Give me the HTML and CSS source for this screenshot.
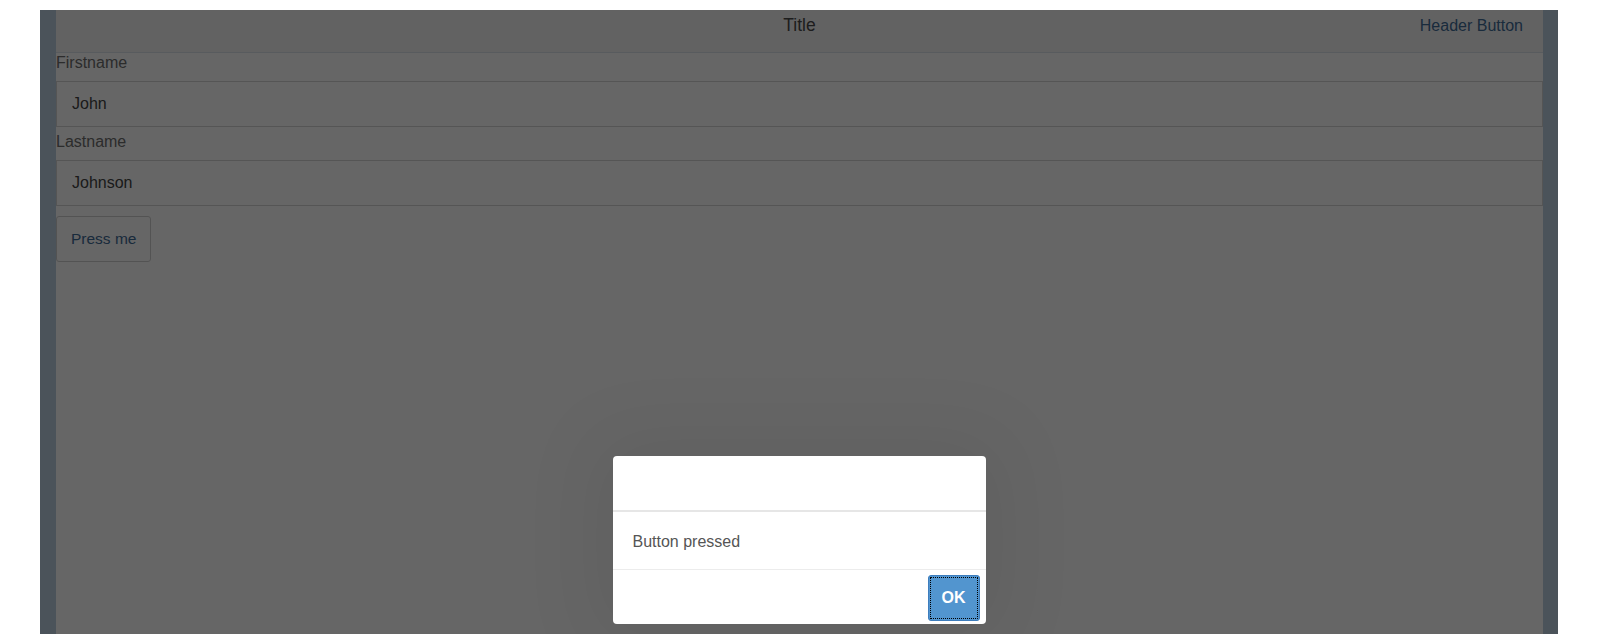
FILE: index.html
```html
<!DOCTYPE html>
<html lang="en">
<head>
    <meta charset="UTF-8">
    <meta name="viewport" content="width=device-width, initial-scale=1.0">
    <title>Title</title>
    <link rel="stylesheet" href="styles.css">
</head>
<body>
    <div class="shell">
        <div class="shell-side shell-left"></div>
        <div class="page">
            <div class="page-header">
                <span></span>
                <span class="page-title">Title</span>
                <button class="header-btn" type="button">Header Button</button>
            </div>
            <div class="form">
                <label class="field-label" for="firstname">Firstname</label>
                <input class="field-input" id="firstname" type="text" value="John">
                <label class="field-label" for="lastname">Lastname</label>
                <input class="field-input" id="lastname" type="text" value="Johnson">
                <button class="btn" type="button">Press me</button>
            </div>
        </div>
        <div class="shell-side shell-right"></div>

        <!-- modal: block layer + message box -->
        <div class="block-layer"></div>
        <div class="dialog-wrap">
            <div class="dialog" role="dialog">
                <div class="dialog-header"></div>
                <div class="dialog-content">Button pressed</div>
                <div class="dialog-footer">
                    <button class="btn-ok" type="button">OK</button>
                </div>
            </div>
        </div>
    </div>
</body>
</html>
```

FILE: styles.css
```css
*{
    box-sizing: border-box;
}
body{
    margin: 0;
    padding: 10px 42px 10px 40px;
    background-color: #fff;
    font-family: "Liberation Sans", Arial, sans-serif;
    font-size: 16px;
    color: #333;
}
.shell{
    position: relative;
    display: flex;
    height: 624px;
    overflow: hidden;
}
.shell-side{
    background-color: #bccfe2;
}
.shell-left{
    width: 16px;
}
.shell-right{
    width: 15px;
}
.page{
    flex: 1;
    background-color: #fff;
}

/* header bar */
.page-header{
    display: grid;
    grid-template-columns: 1fr auto 1fr;
    align-items: start;
    height: 43px;
    line-height: 30px;
    background-color: #f6f6f6;
    border-bottom: 1px solid #dde3ea;
}
.page-title{
    font-size: 17.5px;
    color: #4a4a4a;
}
.header-btn{
    justify-self: end;
    padding: 1px 20px 0 0;
    border: 0;
    background: none;
    font-family: inherit;
    font-size: 16px;
    line-height: 30px;
    color: #3f6b96;
}

/* form */
.field-label{
    display: block;
    line-height: 20px;
    padding-bottom: 8px;
    color: #6e6e6e;
}
.field-input + .field-label{
    padding-top: 5px;
}
.field-input{
    display: block;
    width: 100%;
    height: 46px;
    margin: 0;
    padding: 0 15px;
    border: 1px solid #d4d4d4;
    border-radius: 0;
    background-color: #fff;
    font-family: inherit;
    font-size: 16px;
    color: #444;
    outline: none;
}
.btn{
    display: block;
    height: 46px;
    margin-top: 10px;
    padding: 0 14px;
    border: 1px solid #cfcfcf;
    border-radius: 3px;
    background-color: #fff;
    font-family: inherit;
    font-size: 15.5px;
    color: #3f6b96;
}

/* modal */
.block-layer{
    position: absolute;
    top: 0;
    bottom: 0;
    left: 0;
    right: 0;
    background-color: rgba(0, 0, 0, 0.6);
}
.dialog-wrap{
    position: absolute;
    top: 0;
    bottom: 0;
    left: 0;
    right: 0;
    display: flex;
    justify-content: center;
    align-items: flex-end;
    padding-bottom: 10px;
}
.dialog{
    width: 373px;
    background-color: #fff;
    border-radius: 4px;
    box-shadow: 0 0 80px 20px rgba(0, 0, 0, 0.06);
    overflow: hidden;
}
.dialog-header{
    height: 56px;
    border-bottom: 2px solid #e6e6e6;
}
.dialog-content{
    display: flex;
    align-items: center;
    height: 58px;
    padding: 2px 20px 0;
    border-bottom: 1px solid #ececec;
    color: #555;
}
.dialog-footer{
    display: flex;
    justify-content: flex-end;
    padding: 5px 6px 3px;
}
.btn-ok{
    width: 52px;
    height: 46px;
    border: 1px solid #3d7dbd;
    border-radius: 3px;
    background-color: #5295cf;
    font-family: inherit;
    font-size: 16px;
    font-weight: bold;
    color: #fff;
    outline: 1px dotted #000;
    outline-offset: -3px;
}
```
